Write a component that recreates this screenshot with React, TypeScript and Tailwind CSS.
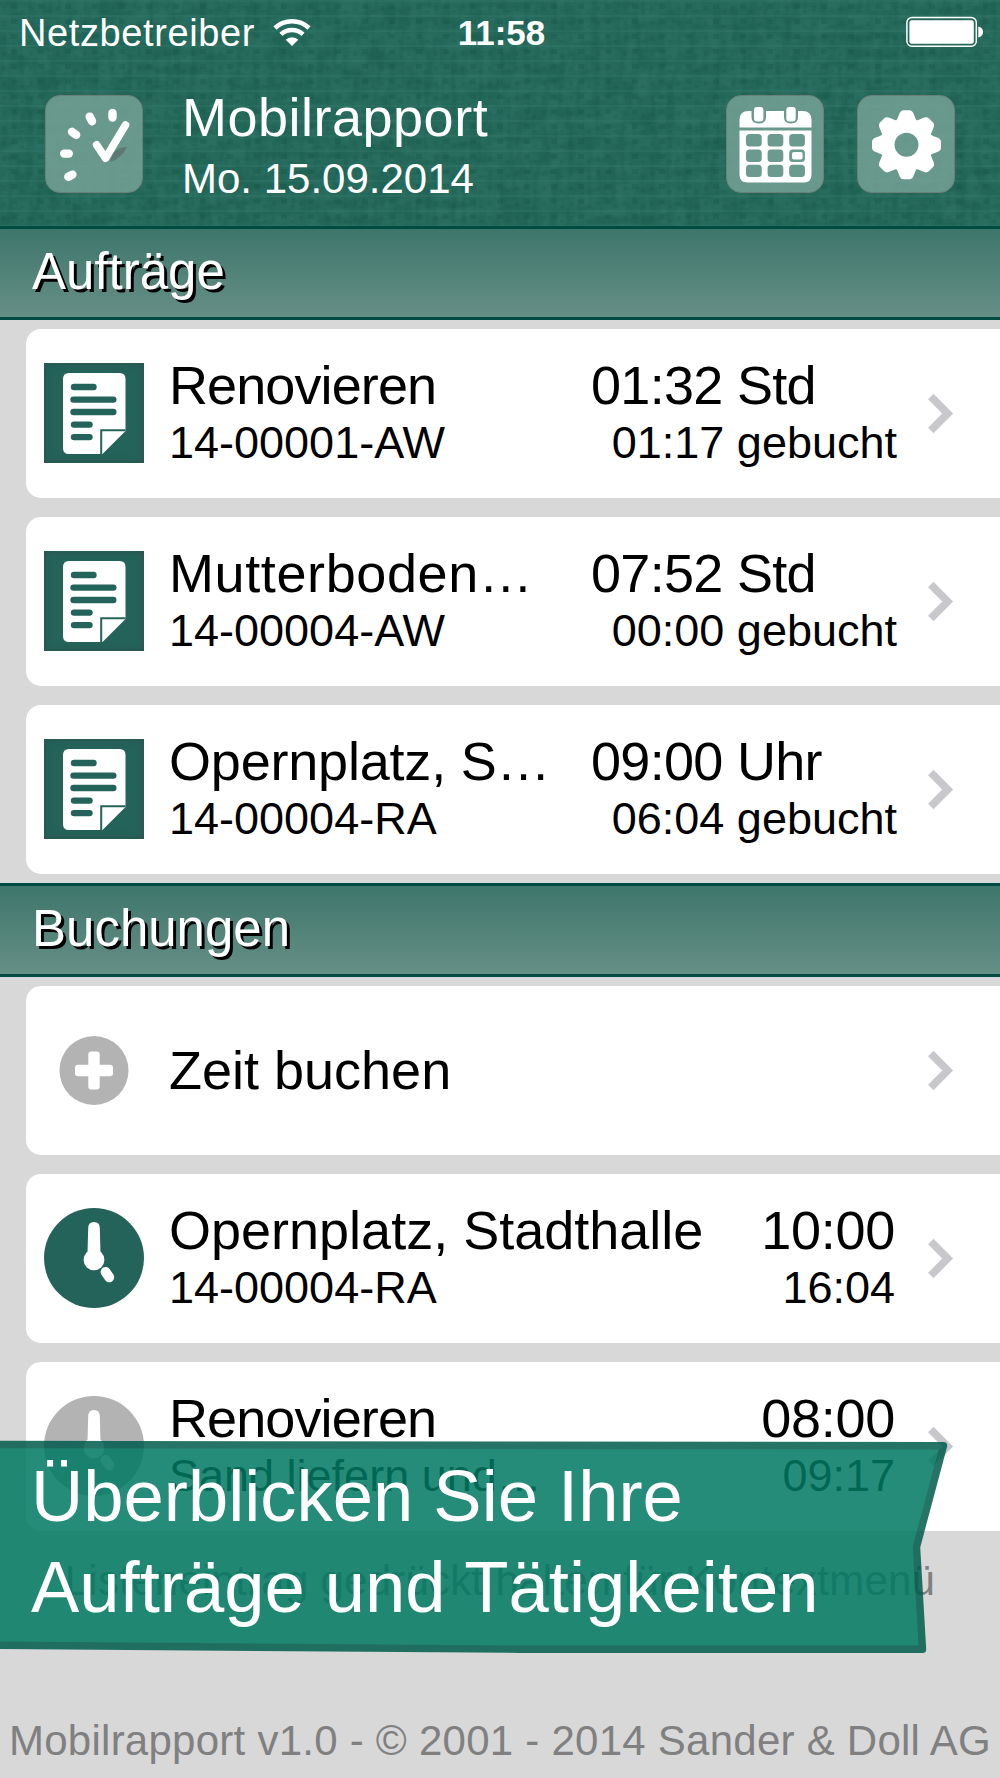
import type { ReactNode } from "react";
import clsx from "clsx";

type Order = {
  title: string;
  number: string;
  planned: string;
  booked: string;
  tracking: string;
};

type Booking = {
  title: string;
  detail: string;
  from: string;
  to: string;
  active: boolean;
  tracking: string;
};

const orders: Order[] = [
  { title: "Renovieren", number: "14-00001-AW", planned: "01:32 Std", booked: "01:17 gebucht", tracking: "tracking-[-0.9px]" },
  { title: "Mutterboden…", number: "14-00004-AW", planned: "07:52 Std", booked: "00:00 gebucht", tracking: "tracking-[0.6px]" },
  { title: "Opernplatz, S…", number: "14-00004-RA", planned: "09:00 Uhr", booked: "06:04 gebucht", tracking: "tracking-[-0.2px]" },
];

const bookings: Booking[] = [
  { title: "Opernplatz, Stadthalle", detail: "14-00004-RA", from: "10:00", to: "16:04", active: true, tracking: "tracking-normal" },
  { title: "Renovieren", detail: "Sand liefern und…", from: "08:00", to: "09:17", active: false, tracking: "tracking-[-0.9px]" },
];

// Linen texture behind the status bar and the title
function Linen() {
  return (
    <svg className="absolute inset-0 h-full w-full" aria-hidden="true">
      <filter id="weft" x="0" y="0" width="100%" height="100%" colorInterpolationFilters="sRGB">
        <feTurbulence type="fractalNoise" baseFrequency="0.03 0.12" numOctaves="2" seed="4" />
        <feColorMatrix values="0 0 0 0 0.09  0 0 0 0 0.35  0 0 0 0 0.29  3 0 0 0 -1.2" />
      </filter>
      <filter id="warp" x="0" y="0" width="100%" height="100%" colorInterpolationFilters="sRGB">
        <feTurbulence type="fractalNoise" baseFrequency="0.12 0.03" numOctaves="2" seed="9" />
        <feColorMatrix values="0 0 0 0 0.09  0 0 0 0 0.35  0 0 0 0 0.29  3 0 0 0 -1.2" />
      </filter>
      <pattern id="thread" width="27" height="15" patternUnits="userSpaceOnUse">
        <rect y="0" width="27" height="2" fill="#3a8070" opacity="0.25" />
        <rect x="11" y="4" width="6" height="5" fill="#124f43" opacity="0.24" />
        <rect x="2" y="6" width="4" height="5" fill="#124f43" opacity="0.14" />
        <rect x="20" y="10" width="4" height="3" fill="#124f43" opacity="0.14" />
      </pattern>
      <rect width="100%" height="100%" filter="url(#weft)" opacity="0.35" />
      <rect width="100%" height="100%" filter="url(#warp)" opacity="0.35" />
      <rect width="100%" height="100%" fill="url(#thread)" />
    </svg>
  );
}

function WifiIcon() {
  return (
    <svg width="40" height="30" viewBox="-20 -29 40 30" fill="none" stroke="white" strokeWidth="4.6">
      <path d="M-17 -18A24.8 24.8 0 0 1 17 -18" />
      <path d="M-11 -11.6A16 16 0 0 1 11 -11.6" />
      <path d="M0 0L-6.3 -6.3A9 9 0 0 1 6.3 -6.3Z" fill="white" stroke="none" />
    </svg>
  );
}

function BatteryIcon() {
  return (
    <svg width="78" height="32" viewBox="0 0 78 32">
      <rect x="0.9" y="1.6" width="69.4" height="28.6" rx="5" fill="none" stroke="white" strokeWidth="1.5" />
      <rect x="3.4" y="4.2" width="64.4" height="23.6" rx="2.5" fill="white" />
      <path d="M72.3 10.6Q77 11.5 77 16T72.3 21.4Z" fill="white" />
    </svg>
  );
}

function LogoIcon() {
  return (
    <svg className="shrink-0" width="97" height="97" viewBox="0 0 97 97" fill="none" stroke="white" strokeLinecap="round">
      <path d="M64 66Q76 62 81 51Q72 51 67 57Z" fill="#5c7a72" stroke="none" />
      <g strokeWidth="8.4">
        <path d="M66.5 17V21.6" />
        <path d="M43.7 20.6L46 25.2" />
        <path d="M26 35.8L30.2 38.8" />
        <path d="M18.2 57.6H22.8" />
        <path d="M22.3 80.8L26.4 78.6" />
      </g>
      <path d="M50.6 48.8L59.5 62.2L79.5 29" strokeWidth="7.6" strokeLinejoin="round" />
    </svg>
  );
}

function CalendarIcon() {
  return (
    <svg className="shrink-0" width="97" height="97" viewBox="0 0 97 97">
      <path
        d="M12.5 31.6V24Q12.5 15 21.5 15H24.5V21Q24.5 27.5 31.7 27.5T39 21V15H57V21Q57 27.5 64 27.5T71 21V15H75.5Q84.5 15 84.5 24V31.6Z"
        fill="white"
      />
      <rect x="27" y="11" width="9.4" height="14.6" rx="3" fill="white" />
      <rect x="59.3" y="11" width="9.4" height="14.6" rx="3" fill="white" />
      <path d="M12.5 34.6H84.5V78.5Q84.5 86.5 76.5 86.5H20.5Q12.5 86.5 12.5 78.5Z" fill="white" />
      {[38, 53.5, 68.7].map((y) =>
        [19, 40.6, 62.2].map((x) => <rect key={`${x}-${y}`} x={x} y={y} width="15.7" height="12.4" rx="3.5" fill="#6b9a8e" />)
      )}
      <rect x="65" y="56" width="10.6" height="7.6" rx="2" fill="white" />
    </svg>
  );
}

function GearIcon() {
  return (
    <svg className="shrink-0" width="97" height="97" viewBox="-48.5 -48.8 97 97">
      <circle r="19" fill="none" stroke="white" strokeWidth="14" />
      {[0, 45, 90, 135, 180, 225, 270, 315].map((angle) => (
        <path
          key={angle}
          transform={`rotate(${angle})`}
          d="M-11.5 -22Q-9 -25.5 -7.5 -30Q-6 -34.5 -3 -34.5H3Q6 -34.5 7.5 -30Q9 -25.5 11.5 -22Z"
          fill="white"
        />
      ))}
    </svg>
  );
}

function DocumentIcon() {
  return (
    <div className="size-[100px] bg-[#24635a] shadow-[inset_0_0_7px_#2c4f48]">
      <svg width="100" height="100" viewBox="0 0 100 100">
        <path d="M25 10H75.5Q81.5 10 81.5 16V68L58.5 91H25Q19 91 19 85V16Q19 10 25 10Z" fill="white" />
        <path d="M57.2 91V67.3H81.5" fill="none" stroke="#24635a" strokeWidth="2" />
        <g stroke="#24635a" strokeWidth="6.4" strokeLinecap="round">
          <path d="M30 24H49.5" />
          <path d="M29.5 36.6H69.3" />
          <path d="M29.5 49H69.3" />
          <path d="M30 61.6H45.5" />
          <path d="M30 74.1H45.5" />
        </g>
      </svg>
    </div>
  );
}

function ClockIcon({ active }: { active: boolean }) {
  return (
    <svg width="100" height="100" viewBox="0 0 100 100">
      <circle cx="50" cy="50" r="50" fill={active ? "#24635a" : "#b3b3b3"} />
      <path d="M44.2 20Q44.2 14 50 14T55.8 20L56.5 45H43.5Z" fill="white" />
      <circle cx="50" cy="51.8" r="10.4" fill="white" />
      <path d="M61.6 64L65.2 69.3" stroke="white" strokeWidth="10" strokeLinecap="round" />
    </svg>
  );
}

function PlusIcon() {
  return (
    <svg width="100" height="100" viewBox="0 0 100 100">
      <circle cx="50" cy="50.5" r="34.5" fill="#b3b3b3" />
      <rect x="31" y="44.8" width="38" height="11.4" rx="3" fill="white" />
      <rect x="44.3" y="31.5" width="11.4" height="38" rx="3" fill="white" />
    </svg>
  );
}

function Chevron() {
  return (
    <svg className="shrink-0" width="28" height="44" viewBox="0 0 28 44" fill="none" stroke="#c7c7cc" strokeWidth="7.6">
      <path d="M2.8 5.5L19.7 22.5L2.8 39.5" />
    </svg>
  );
}

function Tile({ children, className }: { children: ReactNode; className?: string }) {
  return (
    <div className={clsx("flex size-[98px] items-center justify-center rounded-[15px] border border-[#6c7f79] bg-[#7aa599]/80", className)}>
      {children}
    </div>
  );
}

function SectionHeader({ children }: { children: ReactNode }) {
  return (
    <h2 className="h-[94px] border-y-[3px] border-[#004b42] bg-linear-to-b from-[#3d766b] to-[#668f86] pl-8 text-[51px] leading-[86px] text-white [text-shadow:3px_3px_0_#000]">
      {children}
    </h2>
  );
}

function Card({ icon, children }: { icon: ReactNode; children: ReactNode }) {
  return (
    <li className="ml-[26px] flex h-[169px] items-center rounded-l-[15px] bg-white pb-px pl-[18px] pr-[44px]">
      <div className="size-[100px] shrink-0">{icon}</div>
      <div className="ml-[25px] mr-[31px] flex flex-1 justify-between">{children}</div>
      <Chevron />
    </li>
  );
}

function Line({ main, sub, className, tracking }: { main: string; sub: string; className?: string; tracking?: string }) {
  return (
    <div className={clsx("flex flex-col whitespace-nowrap", className)}>
      <span className={clsx("text-[54px] leading-[59px]", tracking)}>{main}</span>
      <span className="text-[45px] leading-[56px]">{sub}</span>
    </div>
  );
}

export default function App() {
  return (
    <div className="relative flex h-[1778px] w-[1000px] flex-col overflow-hidden bg-[#d8d8d8] font-['Liberation_Sans',Arial,sans-serif] text-black">
      <header className="relative h-[226px] bg-[#296e60] text-white">
        <Linen />
        <div className="relative grid h-[64px] grid-cols-3 items-center pl-[19px] pr-4">
          <div className="flex items-center gap-[17px]">
            <span className="pt-0.5 text-[38px] leading-none tracking-[0.6px]">Netzbetreiber</span>
            <WifiIcon />
          </div>
          <span className="pt-0.5 text-center text-[35px] font-bold">11:58</span>
          <div className="flex justify-end">
            <BatteryIcon />
          </div>
        </div>
        <div className="relative flex pl-[45px] pr-[45px] pt-[31px]">
          <Tile>
            <LogoIcon />
          </Tile>
          <div className="-mt-2 ml-[39px] flex flex-1 flex-col">
            <h1 className="text-[54px] leading-[61px] tracking-[0.5px]">Mobilrapport</h1>
            <p className="text-[42px] leading-[61px]">Mo. 15.09.2014</p>
          </div>
          <Tile>
            <CalendarIcon />
          </Tile>
          <Tile className="ml-[33px]">
            <GearIcon />
          </Tile>
        </div>
      </header>

      <SectionHeader>Aufträge</SectionHeader>
      <ul className="flex flex-col gap-[19px] py-[9px]">
        {orders.map((order) => (
          <Card key={order.title} icon={<DocumentIcon />}>
            <Line main={order.title} sub={order.number} tracking={order.tracking} />
            <Line main={order.planned} sub={order.booked} tracking="tracking-[-0.7px] self-start" className="w-[306px] items-end" />
          </Card>
        ))}
      </ul>

      <SectionHeader>Buchungen</SectionHeader>
      <ul className="flex flex-col gap-[19px] pt-[9px]">
        <Card icon={<PlusIcon />}>
          <span className="text-[54px] leading-[60px]">Zeit buchen</span>
        </Card>
        {bookings.map((booking) => (
          <Card key={booking.title} icon={<ClockIcon active={booking.active} />}>
            <Line main={booking.title} sub={booking.detail} tracking={booking.tracking} />
            <Line main={booking.from} sub={booking.to} tracking="tracking-[-0.3px]" className="mr-0.5 text-right" />
          </Card>
        ))}
      </ul>

      <footer className="flex flex-1 flex-col justify-between whitespace-nowrap text-center text-[42px] leading-[60px] tracking-[0.25px] text-[#808080]">
        <p className="pt-5">Listeneintrag gedrückt halten für Kontextmenü</p>
        <p className="pb-[7px]">Mobilrapport v1.0 - © 2001 - 2014 Sander &amp; Doll AG</p>
      </footer>

      {/* Banner over the end of the list */}
      <div className="absolute left-0 top-[1437px] h-[220px] w-[960px]">
        <svg className="absolute inset-0" width="960" height="220" viewBox="0 0 960 220">
          <path
            d="M-10 7.5L943.5 8.8L916.5 110L922.5 212.2H520L-10 208.2Z"
            fill="#007962"
            stroke="#005c4c"
            strokeWidth="7.4"
            strokeLinejoin="round"
            opacity="0.85"
          />
        </svg>
        <p className="relative pl-[31px] pt-[14px] text-[72.4px] leading-[90.5px] text-white">
          Überblicken Sie Ihre
          <br />
          Aufträge und Tätigkeiten
        </p>
      </div>
    </div>
  );
}
